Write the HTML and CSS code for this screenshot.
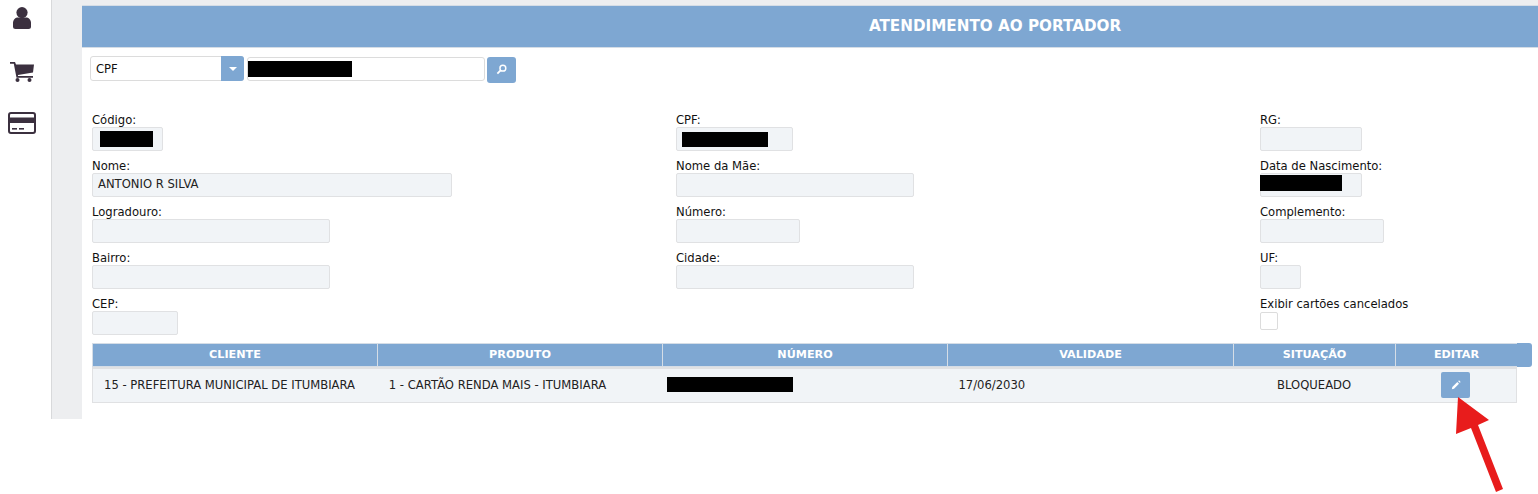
FILE: index.html
```html
<!DOCTYPE html>
<html lang="pt-BR">
<head>
    <meta charset="UTF-8">
    <title>Atendimento ao Portador</title>
    <link rel="stylesheet" href="styles.css">
</head>
<body>
    <div class="layout">
        <nav class="sidebar">
            <svg class="nav-icon icon-user" viewBox="0 0 18 22"><circle cx="9" cy="5.6" r="5.6"/><path d="M0 19.5v-3.5c0-3.5 2.5-5.500 5-5.500h8c2.500 0 5 2 5 5.500v3.500q0 2.500-2.500 2.500h-13q-2.500 0-2.500-2.500z"/></svg>
            <svg class="nav-icon icon-cart" viewBox="0 0 24 20"><path d="M0 0h5l1 2.500h18l-1 8-15 2.500v1h15v1.700H6.500L3.800 1.700H0z"/><circle cx="7.5" cy="18" r="2"/><circle cx="19.5" cy="18" r="2"/></svg>
            <svg class="nav-icon icon-card" viewBox="0 0 28 22"><rect x="1" y="1" width="26" height="20" rx="2" fill="#fff" stroke="#3b303f" stroke-width="2"/><rect x="1" y="5.5" width="26" height="5.5"/><rect x="4" y="16" width="5" height="1.6"/><rect x="11" y="16" width="5" height="1.6"/></svg>
        </nav>
        <div class="gutter"></div>
        <main class="content">
            <header class="page-title">ATENDIMENTO AO PORTADOR</header>

            <div class="search-row">
                <div class="select-box">
                    <span class="select-value">CPF</span>
                    <span class="select-btn"><i class="caret"></i></span>
                </div>
                <div class="search-input"><span class="redact redact-search"></span></div>
                <button class="btn-search">
                    <svg viewBox="0 0 12 12" width="11" height="11"><circle cx="7.5" cy="4.5" r="3.2" fill="none" stroke="#fff" stroke-width="1.6"/><path d="M5 7L1.5 10.5" stroke="#fff" stroke-width="2"/></svg>
                </button>
            </div>

            <section class="form-grid">
                <div class="form-col">
                    <div class="field"><label>Código:</label><div class="input w-71"><span class="redact redact-codigo"></span></div></div>
                    <div class="field"><label>Nome:</label><div class="input w-360">ANTONIO R SILVA</div></div>
                    <div class="field"><label>Logradouro:</label><div class="input w-238"></div></div>
                    <div class="field"><label>Bairro:</label><div class="input w-238"></div></div>
                    <div class="field"><label>CEP:</label><div class="input w-86"></div></div>
                </div>
                <div class="form-col">
                    <div class="field"><label>CPF:</label><div class="input w-117"><span class="redact redact-cpf"></span></div></div>
                    <div class="field"><label>Nome da Mãe:</label><div class="input w-238"></div></div>
                    <div class="field"><label>Número:</label><div class="input w-124"></div></div>
                    <div class="field"><label>Cidade:</label><div class="input w-238"></div></div>
                </div>
                <div class="form-col">
                    <div class="field"><label>RG:</label><div class="input w-102"></div></div>
                    <div class="field"><label>Data de Nascimento:</label><div class="input w-102 flush"><span class="redact redact-nasc"></span></div></div>
                    <div class="field"><label>Complemento:</label><div class="input w-124"></div></div>
                    <div class="field"><label>UF:</label><div class="input w-41"></div></div>
                    <div class="field"><label>Exibir cartões cancelados</label><div class="check"></div></div>
                </div>
            </section>

            <section class="grid-wrap">
                <div class="grid-head">
                    <div class="grid-row">
                        <div class="th col-cliente">CLIENTE</div>
                        <div class="th col-produto">PRODUTO</div>
                        <div class="th col-numero">NÚMERO</div>
                        <div class="th col-validade">VALIDADE</div>
                        <div class="th col-situacao">SITUAÇÃO</div>
                        <div class="th col-editar">EDITAR</div>
                    </div>
                    <div class="scroll-tab"></div>
                </div>
                <div class="grid-row grid-body">
                    <div class="td col-cliente">15 - PREFEITURA MUNICIPAL DE ITUMBIARA</div>
                    <div class="td col-produto">1 - CARTÃO RENDA MAIS - ITUMBIARA</div>
                    <div class="td col-numero num-cell"><span class="redact redact-numero"></span></div>
                    <div class="td col-validade">17/06/2030</div>
                    <div class="td col-situacao center">BLOQUEADO</div>
                    <div class="td col-editar center">
                        <button class="btn-edit">
                            <svg viewBox="0 0 12 12" width="10" height="10"><path d="M1 11l.6-2.6L7.6 2.4l2 2-6 6z" fill="#fff"/><path d="M8.6 1.4l1-1 2 2-1 1z" fill="#fff"/></svg>
                        </button>
                    </div>
                </div>
            </section>
        </main>
    </div>

    <!-- seta vermelha sobre a tela -->
    <svg class="arrow" viewBox="0 0 1538 494" width="1538" height="494"><path d="M1458 397l31 23-11 5 25 64-7 3-25-64-15 6z" fill="#e81c1c"/></svg>
</body>
</html>
```

FILE: styles.css
```css
* {
    box-sizing: border-box;
}

html, body {
    margin: 0;
    padding: 0;
    height: 494px;
    overflow: hidden;
    background-color: #fff;
}

body {
    font-family: "DejaVu Sans", sans-serif;
    font-size: 11.6px;
    color: #111;
}

.layout {
    display: flex;
    height: 419px;
}

.sidebar {
    width: 52px;
    flex: none;
    background-color: #fff;
    border-right: 1px solid #d8d9db;
    display: flex;
    flex-direction: column;
    align-items: center;
    padding-top: 7px;
    padding-right: 7px;
}

.nav-icon {
    display: block;
    flex: none;
    fill: #3b303f;
}

.icon-user {
    width: 18px;
    height: 22px;
}

.icon-cart {
    width: 24px;
    height: 20px;
    margin-top: 33px;
}

.icon-card {
    width: 28px;
    height: 22px;
    margin-top: 30px;
}

.gutter {
    width: 30px;
    flex: none;
    background-color: #edeef0;
}

.content {
    flex: 1;
    min-width: 0;
    padding-top: 5px;
    background: linear-gradient(#edeef0 5px, #fff 5px);
}

.page-title {
    height: 43px;
    padding-left: 370px;
    background-color: #7ea7d2;
    border-top: 1px solid #d5dde6;
    border-bottom: 1px solid #d5dde6;
    color: #fff;
    font-size: 15.2px;
    font-weight: bold;
    line-height: 41px;
    text-align: center;
}

.search-row {
    display: flex;
    align-items: flex-start;
    margin: 8px 0 0 8px;
}

.select-box {
    width: 154px;
    height: 25px;
    display: flex;
    justify-content: space-between;
    border: 1px solid #dcdcdc;
    border-radius: 3px;
}

.select-value {
    padding-left: 5px;
    line-height: 24px;
}

.select-btn {
    width: 23px;
    margin: -1px -1px -1px 0;
    background-color: #7ea7d2;
    border-radius: 0 3px 3px 0;
    display: flex;
    align-items: center;
    justify-content: center;
}

.caret {
    border-left: 4px solid transparent;
    border-right: 4px solid transparent;
    border-top: 4px solid #fff;
}

.search-input {
    width: 238px;
    height: 24px;
    margin: 1px 0 0 3px;
    padding: 3px 0 0;
    border: 1px solid #dcdcdc;
    border-radius: 3px;
}

.btn-search {
    width: 29px;
    height: 26px;
    margin: 1px 0 0 2px;
    padding: 0;
    border: none;
    border-radius: 3px;
    background-color: #7ea7d2;
}

.redact {
    display: block;
    background-color: #000;
    height: 16px;
}

.redact-search { width: 104px; }
.redact-codigo { width: 53px; margin-left: 2px; }
.redact-cpf { width: 86px; height: 15px; margin: 1px 0 0; }
.redact-nasc { width: 82px; margin-left: -6px; }
.redact-numero { width: 126px; height: 15px; }

.form-grid {
    display: grid;
    grid-template-columns: 584px 584px 1fr;
    margin: 29px 0 0 10px;
}

.field {
    height: 46px;
}

.field label {
    display: block;
    height: 15px;
    line-height: 17px;
}

.input {
    height: 24px;
    padding: 3px 5px 0;
    line-height: 14px;
    background-color: #f1f4f7;
    border: 1px solid #e0e1e3;
    border-radius: 2px;
    color: #222;
}

.w-41 { width: 41px; }
.w-71 { width: 71px; }
.w-86 { width: 86px; }
.w-102 { width: 102px; }
.w-117 { width: 117px; }
.w-124 { width: 124px; }
.w-238 { width: 238px; }
.w-360 { width: 360px; }

.flush {
    padding-top: 1px;
}

.check {
    width: 18px;
    height: 18px;
    margin-top: 1px;
    border: 1px solid #dcdcdc;
    border-radius: 2px;
}

.grid-wrap {
    margin: 1px 0 0 10px;
    width: 1440px;
}

.grid-head {
    display: flex;
}

.grid-row {
    display: flex;
    width: 1425px;
}

.grid-head .grid-row {
    height: 24px;
    background-color: #7ea7d2;
    border: 1px solid #d5dde6;
    border-width: 1px 0 1px 1px;
}

.th {
    color: #fff;
    font-weight: bold;
    font-size: 11.2px;
    line-height: 22px;
    text-align: center;
    border-right: 1px solid #d5dde6;
}

.th.col-editar {
    border-right: none;
}

.scroll-tab {
    width: 15px;
    height: 24px;
    background-color: #7ea7d2;
    border-radius: 0 3px 3px 0;
}

.col-cliente { width: 285px; }
.col-produto { width: 285px; }
.col-numero { width: 285px; }
.col-validade { width: 286px; }
.col-situacao { width: 162px; }
.col-editar { width: 121px; }

.grid-body {
    height: 36px;
    background-color: #f1f4f7;
    border: 1px solid #e0e1e3;
    border-top: 2px solid #e0e1e3;
    color: #222;
}

.td {
    padding-left: 11px;
    line-height: 33px;
    white-space: nowrap;
}

.td.center {
    padding-left: 0;
    text-align: center;
}

.num-cell {
    padding: 8px 0 0 4px;
}

.btn-edit {
    width: 29px;
    height: 26px;
    margin-top: 3px;
    padding: 0;
    border: none;
    border-radius: 2px;
    background-color: #7ea7d2;
    vertical-align: top;
}

.arrow {
    position: absolute;
    left: 0;
    top: 0;
    pointer-events: none;
}
```
